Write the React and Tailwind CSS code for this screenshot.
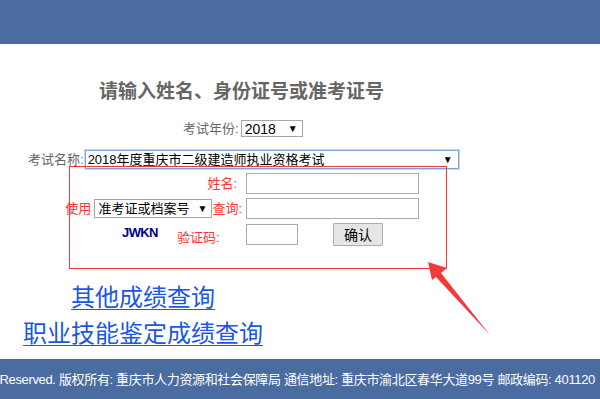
export default function App() {
  const font = { fontFamily: '"Liberation Sans", "Noto Sans CJK SC", sans-serif' };
  return (
    <div className="relative w-[600px] h-[399px] overflow-hidden bg-white" style={font}>
      <div className="h-[44px] bg-[#4a6ca0]" />
      <div className="h-[315px] flex flex-col">
        <div className="mt-[36px] pl-[99px] text-[19px] leading-[24px] font-bold text-[#666666] whitespace-nowrap">
          请输入姓名、身份证号或准考证号
        </div>
        <div className="mt-[16px] pl-[183px] flex items-center h-[17px]">
          <span className="text-[13px] text-[#666666] leading-none">考试年份:</span>
          <div className="ml-[2px] w-[62px] h-[17px] border border-[#a6a6a6] flex items-center justify-between pl-[3px] pr-[4px] text-[14px] text-black leading-none">
            <span>2018</span>
            <span className="text-[10px]">▼</span>
          </div>
        </div>
        <div className="mt-[13px] pl-[28px] flex items-center h-[19px]">
          <span className="text-[13px] text-[#666666] leading-none whitespace-nowrap">考试名称:</span>
          <div className="ml-[1px] w-[374px] h-[19px] border border-[#7ba3dc] shadow-[0_0_0_1px_#c5d8f3] flex items-center justify-between pl-[2px] pr-[5px] text-[13px] text-black leading-none">
            <span className="whitespace-nowrap">2018年度重庆市二级建造师执业资格考试</span>
            <span className="text-[10px]">▼</span>
          </div>
        </div>
        <div className="relative mt-[-3px] ml-[69px] w-[378px] h-[103px] border border-[#f03a3a] flex flex-col">
          <div className="mt-[6px] flex items-center h-[21px]">
            <div className="w-[176px] shrink-0 text-right pr-[9px] text-[13px] text-[#ff3333] leading-none">姓名:</div>
            <div className="w-[173px] h-[21px] border border-[#a9a9a9] bg-white" />
          </div>
          <div className="mt-[4px] flex items-center h-[21px]">
            <div className="w-[176px] shrink-0 flex items-center justify-end pr-[4px] text-[13px] text-[#ff3333] leading-none whitespace-nowrap">
              <span>使用</span>
              <div className="ml-[3px] w-[118px] h-[19px] border border-[#a6a6a6] flex items-center justify-between pl-[3px] pr-[4px] text-black shrink-0">
                <span>准考证或档案号</span>
                <span className="text-[10px]">▼</span>
              </div>
              <span>查询:</span>
            </div>
            <div className="w-[173px] h-[21px] border border-[#a9a9a9] bg-white" />
          </div>
          <div className="mt-[4px] flex items-center h-[23px]">
            <div className="w-[176px] shrink-0 flex items-center">
              <span className="ml-[52px] w-[55px] text-[13px] font-bold text-[#00008b] leading-none tracking-[-0.6px] mt-[-5px]" style={{ fontFamily: '"Liberation Sans", Arial, sans-serif' }}>JWKN</span>
              <span className="text-[13px] text-[#ff3333] leading-none mt-[6px] whitespace-nowrap">验证码:</span>
            </div>
            <div className="w-[52px] h-[21px] border border-[#a9a9a9] bg-white" />
            <div className="ml-[35px] w-[50px] h-[23px] border border-[#adadad] bg-[#e5e5e5] rounded-[1px] flex items-center justify-center text-[14px] text-black leading-none">
              确认
            </div>
          </div>
        </div>
        <div className="mt-[11px] flex flex-col text-[24px] leading-[36px] text-[#1a57e6]">
          <a className="pl-[71px] underline underline-offset-[3px] decoration-1 whitespace-nowrap">其他成绩查询</a>
          <a className="pl-[23px] underline underline-offset-[3px] decoration-1 whitespace-nowrap">职业技能鉴定成绩查询</a>
        </div>
      </div>
      <div className="h-[40px] bg-[#4a6ca0] flex items-center justify-end pr-[5px] overflow-hidden">
        <span className="shrink-0 whitespace-nowrap text-[13px] tracking-[-0.34px] text-white leading-none">
          Reserved. 版权所有: 重庆市人力资源和社会保障局 通信地址: 重庆市渝北区春华大道99号 邮政编码: 401120
        </span>
      </div>
      <svg className="absolute left-0 top-0 pointer-events-none" width="600" height="399" viewBox="0 0 600 399">
        <polygon points="428,262 447,268 441,273 490,335 436,277 432,280" fill="#f23a3a" />
      </svg>
    </div>
  );
}
